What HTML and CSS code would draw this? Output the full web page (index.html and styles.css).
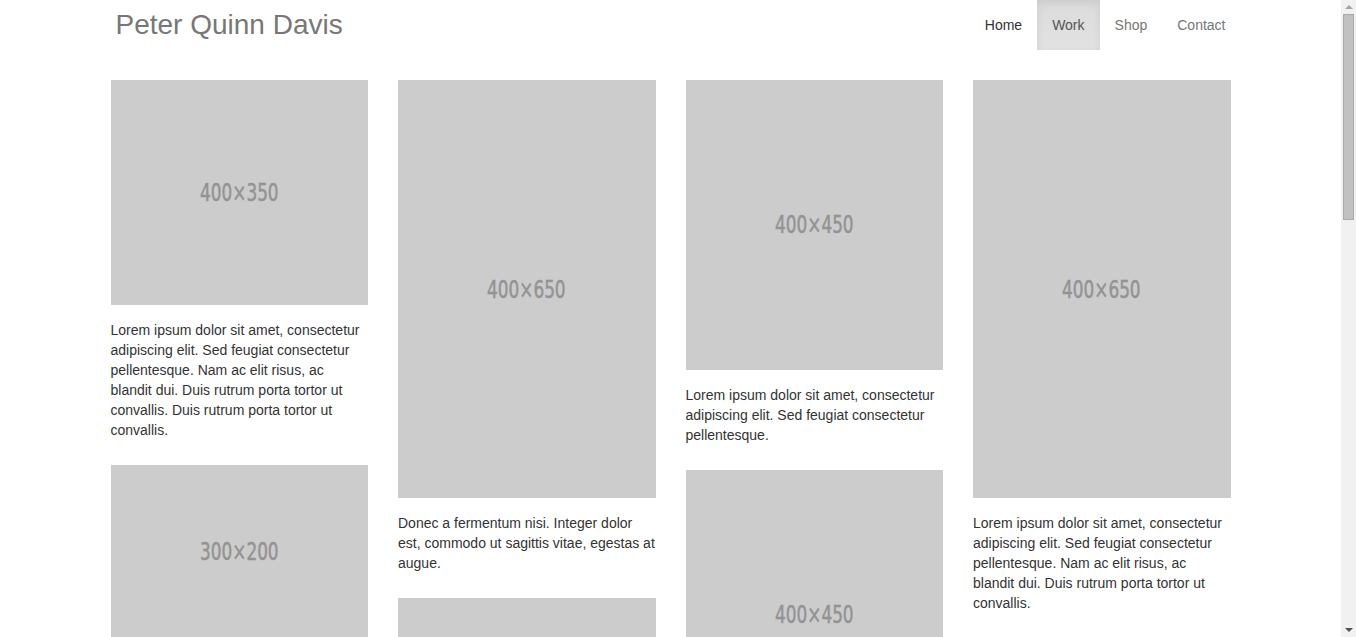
FILE: index.html
```html
<!DOCTYPE html>
<html lang="en">
<head>
<meta charset="utf-8">
<title>Peter Quinn Davis</title>
<link rel="stylesheet" href="styles.css">
</head>
<body>
<div class="page">
<header class="navbar">
  <div class="nav-container">
    <a class="brand" href="#">Peter Quinn Davis</a>
    <ul class="nav">
      <li><a class="home" href="#">Home</a></li>
      <li class="active"><a href="#">Work</a></li>
      <li><a href="#">Shop</a></li>
      <li><a href="#">Contact</a></li>
    </ul>
  </div>
</header>
<main class="grid">
  <div class="col">
    <div class="item">
      <div class="ph ph-400x350"><span>400×350</span></div>
      <p>Lorem ipsum dolor sit amet, consectetur adipiscing elit. Sed feugiat consectetur pellentesque. Nam ac elit risus, ac blandit dui. Duis rutrum porta tortor ut convallis. Duis rutrum porta tortor ut convallis.</p>
    </div>
    <div class="item">
      <div class="ph ph-300x200"><span>300×200</span></div>
      <p>Lorem ipsum dolor sit amet, consectetur adipiscing elit. Sed feugiat consectetur pellentesque.</p>
    </div>
    <div class="item">
      <div class="ph ph-400x650"><span>400×650</span></div>
      <p>Donec a fermentum nisi. Integer dolor est, commodo ut sagittis vitae, egestas at augue.</p>
    </div>
  </div>
  <div class="col">
    <div class="item">
      <div class="ph ph-400x650"><span>400×650</span></div>
      <p>Donec a fermentum nisi. Integer dolor est, commodo ut sagittis vitae, egestas at augue.</p>
    </div>
    <div class="item">
      <div class="ph ph-400x350"><span>400×350</span></div>
      <p>Lorem ipsum dolor sit amet, consectetur adipiscing elit. Sed feugiat consectetur pellentesque. Nam ac elit risus, ac blandit dui. Duis rutrum porta tortor ut convallis.</p>
    </div>
  </div>
  <div class="col">
    <div class="item">
      <div class="ph ph-400x450"><span>400×450</span></div>
      <p>Lorem ipsum dolor sit amet, consectetur adipiscing elit. Sed feugiat consectetur pellentesque.</p>
    </div>
    <div class="item">
      <div class="ph ph-400x450"><span>400×450</span></div>
      <p>Donec a fermentum nisi. Integer dolor est, commodo ut sagittis vitae, egestas at augue.</p>
    </div>
  </div>
  <div class="col">
    <div class="item">
      <div class="ph ph-400x650"><span>400×650</span></div>
      <p>Lorem ipsum dolor sit amet, consectetur adipiscing elit. Sed feugiat consectetur pellentesque. Nam ac elit risus, ac blandit dui. Duis rutrum porta tortor ut convallis.</p>
    </div>
    <div class="item">
      <div class="ph ph-300x200"><span>300×200</span></div>
      <p>Donec a fermentum nisi. Integer dolor est, commodo ut sagittis vitae, egestas at augue.</p>
    </div>
  </div>
</main>
</div>
<div class="scrollbar" aria-hidden="true">
  <div class="sb-arrow sb-up"></div>
  <div class="sb-track"><div class="sb-thumb"></div></div>
  <div class="sb-arrow sb-down"></div>
</div>
</body>
</html>
```
FILE: styles.css
```css
* { box-sizing: border-box; }

html, body {
  margin: 0;
  padding: 0;
  height: 100%;
}

body {
  background: #fff;
  color: #333;
  font-family: "Liberation Sans", Arial, Helvetica, sans-serif;
  font-size: 14px;
  line-height: 20px;
  display: flex;
  overflow: hidden;
}

.page {
  flex: 1;
  min-width: 0;
  height: 100%;
  overflow: hidden;
}

/* imitation of the browser's classic scrollbar */
.scrollbar {
  width: 15px;
  flex: none;
  height: 100%;
  background: #f1f1f1;
  display: flex;
  flex-direction: column;
}

.sb-arrow {
  height: 14px;
  display: flex;
  align-items: center;
  justify-content: center;
}

.sb-up::before,
.sb-down::before {
  content: "";
  width: 0;
  height: 0;
  border-left: 4px solid transparent;
  border-right: 4px solid transparent;
}

.sb-up::before { border-bottom: 4px solid #a3a3a3; }
.sb-down::before { border-top: 4px solid #505050; }

.sb-track {
  flex: 1;
  padding: 0 2px;
}

.sb-thumb {
  height: 206px;
  background: #c1c1c1;
  border: 1px solid #a9a9a9;
}

.navbar {
  height: 50px;
}

.nav-container {
  width: 1170px;
  margin: 0 auto;
  padding: 0 15px;
  display: flex;
  justify-content: space-between;
  align-items: stretch;
  height: 50px;
}

.brand {
  display: block;
  padding: 0 15px;
  font-size: 28px;
  line-height: 50px;
  height: 50px;
  color: #777;
  text-decoration: none;
}

.nav {
  display: flex;
  list-style: none;
  margin: 0;
  padding: 0;
}

.nav li a {
  display: block;
  padding: 15px;
  line-height: 20px;
  height: 50px;
  color: #777;
  text-decoration: none;
}

.nav li a.home {
  color: #333;
}

.nav li.active a {
  color: #555;
  background-image: linear-gradient(to bottom, #dbdbdb 0%, #e2e2e2 100%);
  box-shadow: inset 0 3px 9px rgba(0, 0, 0, 0.075);
}

.grid {
  width: 1120px;
  margin: 30px auto 0;
  display: grid;
  grid-template-columns: repeat(4, 1fr);
  column-gap: 30px;
  align-items: start;
}

.col {
  display: flex;
  flex-direction: column;
}

.item {
  margin-bottom: 25px;
}

.item p {
  margin: 15px 0 0;
}

.ph {
  width: 100%;
  background: #ccc;
  display: flex;
  align-items: center;
  justify-content: center;
}

.ph span {
  font-family: "DejaVu Sans Condensed", "DejaVu Sans", sans-serif;
  font-size: 25px;
  color: #939393;
  line-height: 1;
  display: inline-block;
  transform: scaleX(0.75);
  -webkit-text-stroke: 0.5px #939393;
}

.ph-400x350 { aspect-ratio: 400 / 350; }
.ph-400x450 { aspect-ratio: 400 / 450; }
.ph-400x650 { aspect-ratio: 400 / 650; }
.ph-300x200 { aspect-ratio: 300 / 200; }
```
